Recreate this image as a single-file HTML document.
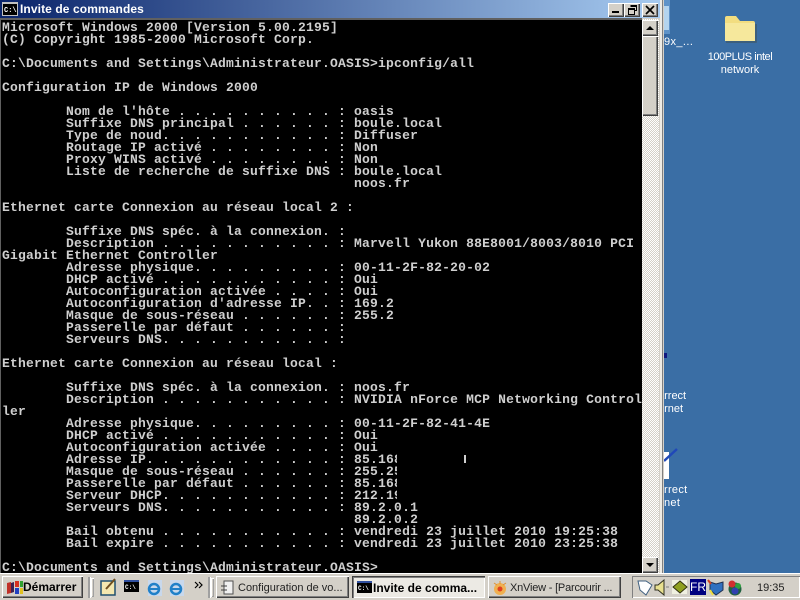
<!DOCTYPE html>
<html><head><meta charset="utf-8"><style>
html,body{margin:0;padding:0;width:800px;height:600px;overflow:hidden;background:#3a6ea5}
div,pre,svg{position:absolute;box-sizing:border-box}
body{font-family:"Liberation Sans",sans-serif}
.raised{background:#d4d0c8;box-shadow:inset 1px 1px 0 #fff,inset -1px -1px 0 #404040,inset -2px -2px 0 #808080}
.t{white-space:nowrap}
.d{color:#fff;font-size:11px;line-height:13px;text-align:center;white-space:nowrap}
pre{margin:0;font-family:"Liberation Mono",monospace;font-weight:bold;font-size:13px;line-height:12px;letter-spacing:.2px;color:#cfcfcf}
</style></head><body>
<div style="left:0;top:0;width:800px;height:600px;background:#3a6ea5"></div>

<!-- desktop -->
<svg style="left:664px;top:0" width="6" height="34"><rect width="6" height="34" fill="#5f93c8"/><rect x="0" y="6" width="5" height="24" fill="#b4d4ee"/></svg>
<div class="d" style="left:664px;top:36px;letter-spacing:.4px">9x_...</div>
<svg style="left:723px;top:14px" width="34" height="30" viewBox="0 0 34 30"><path d="M2 27V4q0-2 2-2h9l4 5h13q2 0 2 2v18z" fill="#f2dd80"/><rect x="2" y="9" width="30" height="18" fill="#f6e89c"/><path d="M3 28h30V10" fill="none" stroke="#3d5a70" stroke-width="1.5"/></svg>
<div class="d" style="left:700px;top:51px;width:80px;line-height:13px"><span style="letter-spacing:-.45px">100PLUS intel</span><br>network</div>
<div class="d" style="left:658px;top:390px;text-align:left;line-height:13px">arrect<br>ernet</div>
<div style="left:664px;top:353px;width:3px;height:5px;background:#101880"></div>
<svg style="left:663px;top:448px" width="15" height="32"><rect x="0" y="4" width="6" height="27" fill="#fff"/><path d="M1 13L14 1" stroke="#2048b8" stroke-width="2.5"/></svg>
<div class="d" style="left:664px;top:484px;text-align:left;line-height:13px;letter-spacing:.3px">rrect<br>net</div>

<!-- window -->
<div style="left:0;top:0;width:664px;height:573px;background:#d4d0c8"></div>
<div style="left:660px;top:0;width:2px;height:573px;background:#eeece6"></div>
<div style="left:662px;top:0;width:1px;height:573px;background:#808080"></div>
<div style="left:0;top:0;width:660px;height:18px;background:linear-gradient(90deg,#0a246a,#a6caf0)"></div>
<svg style="left:2px;top:2px" width="16" height="14"><rect width="16" height="14" fill="#c0c0c0"/><rect x="1" y="2" width="14" height="11" fill="#000"/><text x="2" y="10" font-family="Liberation Mono" font-size="7" font-weight="bold" fill="#fff">C:\</text></svg>
<div class="t" style="left:20px;top:0;font-size:12px;line-height:18px;font-weight:bold;color:#fff;letter-spacing:.1px">Invite de commandes</div>
<div class="raised" style="left:608px;top:3px;width:16px;height:14px"></div><div style="left:612px;top:11px;width:7px;height:2px;background:#000"></div>
<div class="raised" style="left:624px;top:3px;width:16px;height:14px"></div>
<svg style="left:627px;top:4px" width="11" height="11"><path d="M3.5 1.5h6v5h-2M1.5 4.5h6v6h-6z M3.5 2.5h6M1.5 5.5h6" fill="none" stroke="#000"/></svg>
<div class="raised" style="left:642px;top:3px;width:16px;height:14px"></div>
<svg style="left:645px;top:5px" width="11" height="10"><path d="M1 1l8 8M9 1l-8 8" stroke="#000" stroke-width="1.7"/></svg>

<div style="left:0;top:19px;width:642px;height:554px;background:#000"></div>
<div style="left:0;top:18px;width:642px;height:2px;background:#606060"></div>
<div style="left:0;top:20px;width:1px;height:553px;background:#606060"></div>
<pre style="left:2px;top:22px">Microsoft Windows 2000 [Version 5.00.2195]
(C) Copyright 1985-2000 Microsoft Corp.

C:\Documents and Settings\Administrateur.OASIS&gt;ipconfig/all

Configuration IP de Windows 2000

        Nom de l'hôte . . . . . . . . . . : oasis
        Suffixe DNS principal . . . . . . : boule.local
        Type de noud. . . . . . . . . . . : Diffuser
        Routage IP activé . . . . . . . . : Non
        Proxy WINS activé . . . . . . . . : Non
        Liste de recherche de suffixe DNS : boule.local
                                            noos.fr

Ethernet carte Connexion au réseau local 2 :

        Suffixe DNS spéc. à la connexion. :
        Description . . . . . . . . . . . : Marvell Yukon 88E8001/8003/8010 PCI
Gigabit Ethernet Controller
        Adresse physique. . . . . . . . . : 00-11-2F-82-20-02
        DHCP activé . . . . . . . . . . . : Oui
        Autoconfiguration activée . . . . : Oui
        Autoconfiguration d'adresse IP. . : 169.2
        Masque de sous-réseau . . . . . . : 255.2
        Passerelle par défaut . . . . . . :
        Serveurs DNS. . . . . . . . . . . :

Ethernet carte Connexion au réseau local :

        Suffixe DNS spéc. à la connexion. : noos.fr
        Description . . . . . . . . . . . : NVIDIA nForce MCP Networking Control
ler
        Adresse physique. . . . . . . . . : 00-11-2F-82-41-4E
        DHCP activé . . . . . . . . . . . : Oui
        Autoconfiguration activée . . . . : Oui
        Adresse IP. . . . . . . . . . . . : 85.168
        Masque de sous-réseau . . . . . . : 255.25
        Passerelle par défaut . . . . . . : 85.168
        Serveur DHCP. . . . . . . . . . . : 212.19
        Serveurs DNS. . . . . . . . . . . : 89.2.0.1
                                            89.2.0.2
        Bail obtenu . . . . . . . . . . . : vendredi 23 juillet 2010 19:25:38
        Bail expire . . . . . . . . . . . : vendredi 23 juillet 2010 23:25:38

C:\Documents and Settings\Administrateur.OASIS&gt;</pre>
<div style="left:397px;top:453px;width:70px;height:48px;background:#000"></div>
<div style="left:464px;top:455px;width:2px;height:8px;background:#cfcfcf"></div>

<!-- scrollbar -->
<div style="left:642px;top:19px;width:17px;height:554px;background:repeating-conic-gradient(#fff 0 25%,#d4d0c8 0 50%) 0 0/2px 2px"></div>
<div class="raised" style="left:642px;top:20px;width:16px;height:16px"></div>
<svg style="left:645px;top:25px" width="10" height="6"><path d="M5 1l4 4H1z" fill="#000"/></svg>
<div class="raised" style="left:642px;top:36px;width:16px;height:80px"></div>
<div class="raised" style="left:642px;top:557px;width:16px;height:16px"></div>
<svg style="left:645px;top:562px" width="10" height="6"><path d="M5 5L1 1h8z" fill="#000"/></svg>

<!-- taskbar -->
<div style="left:0;top:573px;width:800px;height:27px;background:#d4d0c8;box-shadow:inset 0 1px 0 #fff"></div>
<div class="raised" style="left:2px;top:576px;width:81px;height:22px"></div>
<svg style="left:6px;top:580px" width="18" height="16"><path d="M1 3l4-1v11l-4 1z" fill="#c03028"/><path d="M5 3l3-1v10l-3 1z" fill="#402050"/><rect x="9" y="1" width="4" height="6" fill="#d83020"/><rect x="14" y="1" width="3" height="6" fill="#30a030"/><rect x="9" y="8" width="4" height="6" fill="#2040c0"/><rect x="14" y="8" width="3" height="6" fill="#e0c020"/></svg>
<div class="t" style="left:23px;top:580px;font-size:12px;line-height:15px;font-weight:bold;color:#000">Démarrer</div>

<div style="left:88px;top:577px;width:2px;height:21px;background:#a0a0a0;box-shadow:1px 0 0 #fff"></div>
<div style="left:91px;top:578px;width:3px;height:19px;background:#d4d0c8;box-shadow:inset 1px 1px 0 #fff,inset -1px -1px 0 #a0a0a0"></div>
<svg style="left:100px;top:578px" width="17" height="18"><rect x="1" y="3" width="14" height="14" fill="#f4e8b0" stroke="#205070" stroke-width="1.5"/><path d="M6 11L15 1" stroke="#705020" stroke-width="2"/></svg>
<svg style="left:124px;top:580px" width="15" height="12"><rect width="15" height="12" fill="#000"/><rect width="15" height="2" fill="#3050a0"/><text x="1" y="9" font-family="Liberation Mono" font-size="6" font-weight="bold" fill="#fff">C:\</text></svg>
<svg style="left:146px;top:580px" width="17" height="16"><rect x="2" y="0" width="14" height="16" fill="#c8d8ec"/><circle cx="8" cy="9" r="5" fill="none" stroke="#2080c8" stroke-width="2.5"/><path d="M3 9h10" stroke="#2080c8" stroke-width="2"/></svg>
<svg style="left:168px;top:580px" width="17" height="16"><rect x="2" y="0" width="14" height="16" fill="#c8d8ec"/><circle cx="8" cy="9" r="5" fill="none" stroke="#2080c8" stroke-width="2.5"/><path d="M3 9h10" stroke="#2080c8" stroke-width="2"/></svg>
<svg style="left:194px;top:581px" width="11" height="8"><path d="M1 1l3 3-3 3M5 1l3 3-3 3" fill="none" stroke="#000" stroke-width="1.2"/></svg>
<div style="left:208px;top:577px;width:2px;height:21px;background:#a0a0a0;box-shadow:1px 0 0 #fff"></div>
<div style="left:211px;top:578px;width:3px;height:19px;background:#d4d0c8;box-shadow:inset 1px 1px 0 #fff,inset -1px -1px 0 #a0a0a0"></div>

<div class="raised" style="left:216px;top:576px;width:133px;height:22px"></div>
<svg style="left:220px;top:580px" width="16" height="16"><rect x="4" y="1" width="9" height="13" fill="#f0f0f0" stroke="#505050"/><path d="M1 6h6M1 10h6" stroke="#404040"/></svg>
<div class="t" style="left:238px;top:581px;font-size:11px;line-height:15px;color:#222">Configuration de vo...</div>

<div style="left:352px;top:576px;width:133px;height:22px;background:#eceae4;box-shadow:inset 1px 1px 0 #404040,inset 2px 2px 0 #808080,inset -1px -1px 0 #fff"></div>
<svg style="left:357px;top:581px" width="15" height="12"><rect width="15" height="12" fill="#000"/><rect width="15" height="2" fill="#3050a0"/><text x="1" y="9" font-family="Liberation Mono" font-size="6" font-weight="bold" fill="#fff">C:\</text></svg>
<div class="t" style="left:373px;top:581px;font-size:12px;line-height:15px;font-weight:bold;color:#000">Invite de comma...</div>

<div class="raised" style="left:488px;top:576px;width:133px;height:22px"></div>
<svg style="left:492px;top:580px" width="16" height="16"><circle cx="8" cy="9" r="6" fill="#f0b050"/><circle cx="8" cy="9" r="2.5" fill="#e04020"/><path d="M2 3l3 2M8 1v3M14 3l-3 2" stroke="#e09030"/></svg>
<div class="t" style="left:510px;top:581px;font-size:11px;line-height:15px;color:#222;letter-spacing:-.2px">XnView - [Parcourir ...</div>

<div style="left:632px;top:576px;width:168px;height:22px;box-shadow:inset 1px 1px 0 #808080,inset -1px -1px 0 #fff"></div>
<svg style="left:636px;top:579px" width="18" height="18"><path d="M2 2h8l6 4-6 10-6-5z" fill="#fff" stroke="#406080"/></svg>
<svg style="left:653px;top:579px" width="16" height="17"><path d="M2 6h3l6-5v15l-6-5H2z" fill="#e8e090" stroke="#303020"/><path d="M13 8h3" stroke="#808080"/></svg>
<svg style="left:671px;top:579px" width="17" height="16"><rect x="1" y="1" width="15" height="14" fill="#f0f0e0"/><path d="M2 8l7-6 7 6-7 6z" fill="#90a020" stroke="#303010"/></svg>
<div style="left:690px;top:579px;width:16px;height:16px;background:#000080;color:#fff;font-size:12px;line-height:16px;text-align:center">FR</div>
<svg style="left:707px;top:579px" width="18" height="17"><path d="M3 3l6 2 7-2v8l-7 5-6-5z" fill="#3070c0" stroke="#203050"/><path d="M1 1l3 4" stroke="#d04020" stroke-width="2"/><path d="M3 11l3 5" stroke="#f0e040" stroke-width="2"/></svg>
<svg style="left:726px;top:579px" width="17" height="17"><circle cx="9" cy="10" r="6.5" fill="#206040"/><circle cx="6" cy="5" r="3.5" fill="#d03030"/><circle cx="12" cy="7" r="3" fill="#30a040"/><circle cx="9" cy="12" r="3.5" fill="#3040b0"/></svg>
<div class="t" style="left:757px;top:581px;font-size:11px;line-height:15px;color:#222">19:35</div>
</body></html>
